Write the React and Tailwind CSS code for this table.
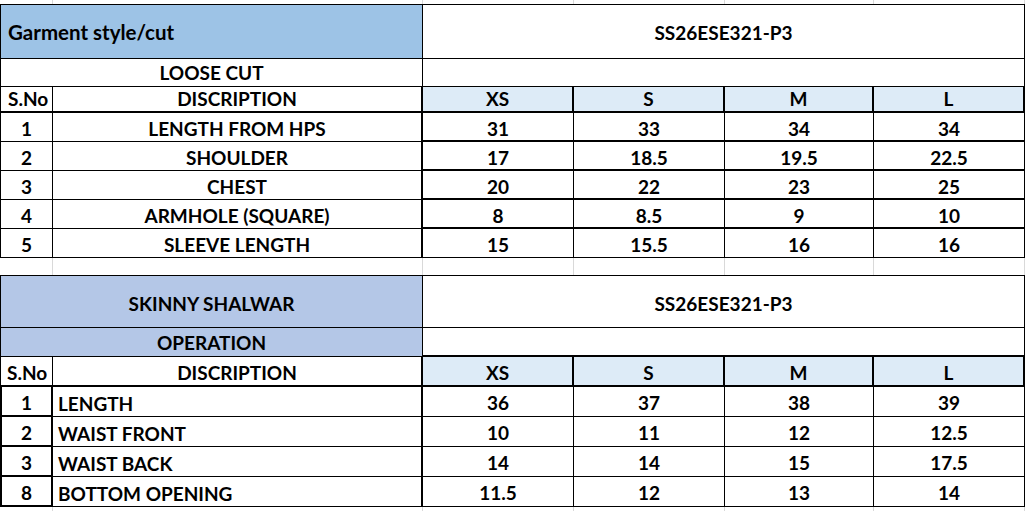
const grid = "grid grid-cols-[53px_370px_151px_151px_149px_151px]";

const sizes = ["XS", "S", "M", "L"];

const looseCut = [
  ["1", "LENGTH FROM HPS", ["31", "33", "34", "34"]],
  ["2", "SHOULDER", ["17", "18.5", "19.5", "22.5"]],
  ["3", "CHEST", ["20", "22", "23", "25"]],
  ["4", "ARMHOLE (SQUARE)", ["8", "8.5", "9", "10"]],
  ["5", "SLEEVE LENGTH", ["15", "15.5", "16", "16"]],
];

const shalwar = [
  ["1", "LENGTH", ["36", "37", "38", "39"]],
  ["2", "WAIST FRONT", ["10", "11", "12", "12.5"]],
  ["3", "WAIST BACK", ["14", "14", "15", "17.5"]],
  ["8", "BOTTOM OPENING", ["11.5", "12", "13", "14"]],
];

const GridLines = ({ h }) => (
  <div className={`${grid} ${h}`}>
    {[0, 1, 2, 3, 4, 5].map((i) => (
      <div key={i} className="border-r border-[#d9d9d9]" />
    ))}
  </div>
);

const App = () => {
  return (
    <div className="w-[1028px] h-[511px] bg-white overflow-hidden text-black font-bold text-[19px] leading-none font-[Lato,'Liberation_Sans',sans-serif]">
      <GridLines h="h-[4px]" />

      {/* loose cut table */}
      <div className={`${grid} h-[55px]`}>
        <div className="col-span-2 flex items-center pl-[7px] pt-[2px] text-[20.5px] bg-[#9dc3e6] border border-black">
          Garment style/cut
        </div>
        <div className="col-span-4 flex items-center justify-center pt-[2px] border-y border-r border-black">
          SS26ESE321-P3
        </div>
      </div>
      <div className={`${grid} h-[28px]`}>
        <div className="col-span-2 flex items-end justify-center pb-[4px] border-x border-b border-black">
          LOOSE CUT
        </div>
        <div className="col-span-4 border-r border-b border-black" />
      </div>
      <div className={`${grid} h-[26px]`}>
        <div className="flex items-end pl-[7px] pb-[3px] border-l border-r border-b-2 border-black">S.No</div>
        <div className="flex items-end justify-center pb-[3px] border-r-2 border-b-2 border-black">DISCRIPTION</div>
        {sizes.map((s) => (
          <div key={s} className="flex items-end justify-center pb-[3px] bg-[#ddebf7] border-r-2 border-b-2 border-black">
            {s}
          </div>
        ))}
      </div>
      {looseCut.map(([no, desc, vals], r) => (
        <div key={no} className={`${grid} h-[29px]`}>
          <div className="flex items-end justify-center pb-[3px] border-l border-r border-b border-black">{no}</div>
          <div className="flex items-end justify-center pb-[3px] border-r-2 border-b border-black">{desc}</div>
          {vals.map((v, i) => (
            <div
              key={i}
              className={
                r === looseCut.length - 1
                  ? "flex items-end justify-center pb-[3px] border-r border-b border-black"
                  : "flex items-end justify-center pb-[2px] border-r border-b-2 border-black"
              }
            >
              {v}
            </div>
          ))}
        </div>
      ))}

      <GridLines h="h-[17px]" />

      {/* skinny shalwar table */}
      <div className={`${grid} h-[53px]`}>
        <div className="col-span-2 flex items-center justify-center pt-[4px] bg-[#b4c7e7] border border-black">
          SKINNY SHALWAR
        </div>
        <div className="col-span-4 flex items-center justify-center pt-[4px] border-y border-r border-black">
          SS26ESE321-P3
        </div>
      </div>
      <div className={`${grid} h-[29px]`}>
        <div className="col-span-2 flex items-end justify-center pb-[4px] bg-[#b4c7e7] border-x border-b border-black">
          OPERATION
        </div>
        <div className="col-span-4 border-r border-b-2 border-black" />
      </div>
      <div className={`${grid} h-[30px]`}>
        <div className="flex items-end pl-[6px] pb-[3px] border-l border-r border-b-2 border-black">S.No</div>
        <div className="flex items-end justify-center pb-[3px] border-r-2 border-b-2 border-black">DISCRIPTION</div>
        {sizes.map((s) => (
          <div key={s} className="flex items-end justify-center pb-[3px] bg-[#ddebf7] border-r-2 border-b-2 border-black">
            {s}
          </div>
        ))}
      </div>
      {shalwar.map(([no, desc, vals]) => (
        <div key={no} className={`${grid} h-[30px]`}>
          <div className="flex items-end justify-center pb-[3px] border-l-2 border-r-2 border-b-2 border-black">{no}</div>
          <div className="flex items-end pl-[5px] pb-[3px] border-r-2 border-b border-black">{desc}</div>
          {vals.map((v, i) => (
            <div key={i} className="flex items-end justify-center pb-[4px] border-r border-b border-black">
              {v}
            </div>
          ))}
        </div>
      ))}

      <GridLines h="h-[4px]" />
    </div>
  );
};

export default App;
